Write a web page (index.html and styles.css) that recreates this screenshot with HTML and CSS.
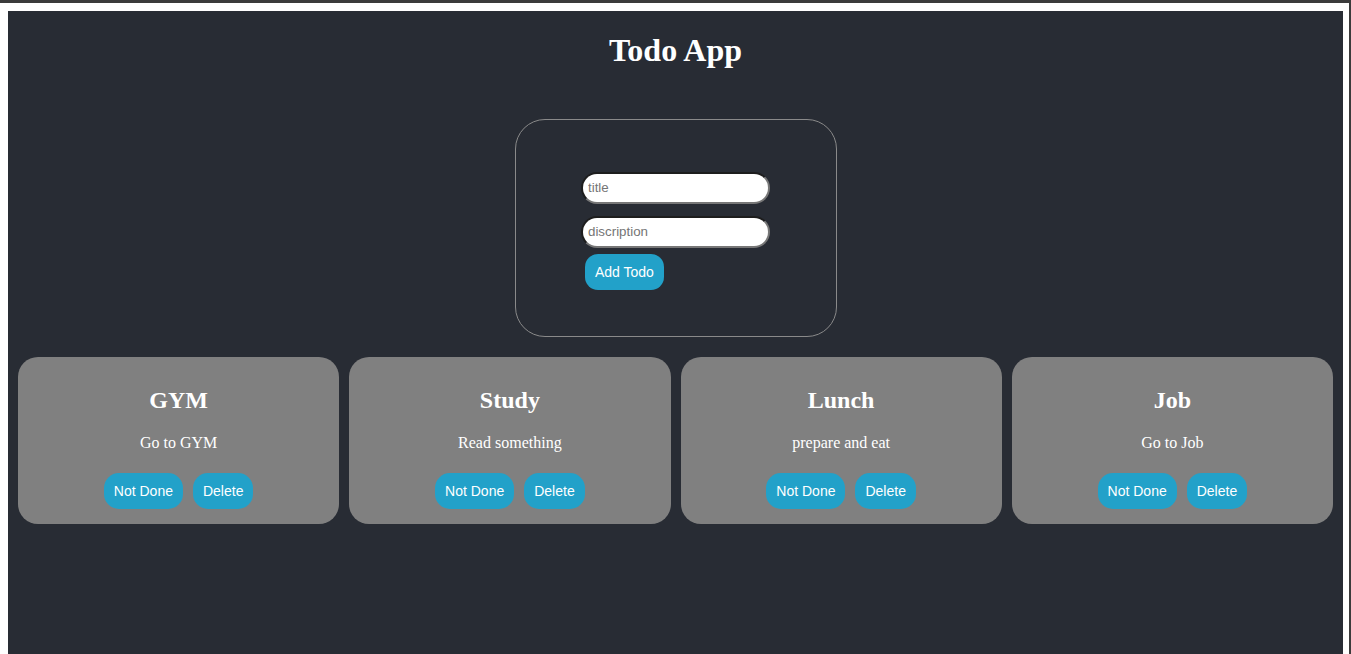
FILE: index.html
```html
<!DOCTYPE html>
<html lang="en">
<head>
<meta charset="utf-8">
<title>Todo App</title>
<link rel="stylesheet" href="styles.css">
</head>
<body>
<div class="app">
  <h1 class="title">Todo App</h1>
  <div class="form-box">
    <div class="form">
      <input class="field" type="text" placeholder="title">
      <input class="field" type="text" placeholder="discription">
      <button class="btn add-btn">Add Todo</button>
    </div>
  </div>
  <div class="cards">
    <div class="card">
      <h2 class="card-title">GYM</h2>
      <p class="card-desc">Go to GYM</p>
      <div class="actions"><button class="btn">Not Done</button><button class="btn">Delete</button></div>
    </div>
    <div class="card">
      <h2 class="card-title">Study</h2>
      <p class="card-desc">Read something</p>
      <div class="actions"><button class="btn">Not Done</button><button class="btn">Delete</button></div>
    </div>
    <div class="card">
      <h2 class="card-title">Lunch</h2>
      <p class="card-desc">prepare and eat</p>
      <div class="actions"><button class="btn">Not Done</button><button class="btn">Delete</button></div>
    </div>
    <div class="card">
      <h2 class="card-title">Job</h2>
      <p class="card-desc">Go to Job</p>
      <div class="actions"><button class="btn">Not Done</button><button class="btn">Delete</button></div>
    </div>
  </div>
</div>
</body>
</html>
```

FILE: styles.css
```css
html {
  border-top: 3px solid #3b3b3b;
  border-right: 2px solid #3b3b3b;
  background: #fff;
}
body {
  margin: 8px 6px 0 8px;
  font-family: "Liberation Serif", "Times New Roman", serif;
}
.app {
  background: #282c34;
  min-height: calc(100vh - 11px);
  padding: 21px 10px 20px;
  box-sizing: border-box;
  color: #fff;
}
.title {
  margin: 0;
  font-size: 32px;
  font-weight: bold;
  text-align: center;
  line-height: 37px;
  color: #fff;
}
.form-box {
  width: 322px;
  margin: 50px auto 0;
  box-sizing: border-box;
  border: 1px solid #8a8a8a;
  border-radius: 30px;
  padding: 52px 0 46px;
  display: flex;
  justify-content: center;
}
.form {
  width: 189px;
  display: flex;
  flex-direction: column;
  align-items: flex-start;
}
.field {
  width: 189px;
  height: 32px;
  box-sizing: border-box;
  border: 2px solid;
  border-color: #1d1d1d #777 #777 #1d1d1d;
  border-radius: 16px;
  padding: 0 5px 1px;
  font-family: "Liberation Sans", Arial, sans-serif;
  font-size: 13.33px;
  background: #fff;
  color: #000;
  margin: 0 0 12px;
}
.field:nth-of-type(2) { margin-bottom: 6px; }
.field::placeholder { color: #757575; }
.btn {
  background: #22a1c9;
  color: #fff;
  border: none;
  border-radius: 15px;
  padding: 0 10px;
  height: 35px;
  font-family: "Liberation Sans", Arial, sans-serif;
  font-size: 14px;
  cursor: pointer;
}
.add-btn {
  height: 36px;
  margin-left: 4px;
  border-radius: 13px;
}
.cards {
  display: grid;
  grid-template-columns: repeat(4, 1fr);
  gap: 10px;
  margin-top: 20px;
}
.card {
  background: #808080;
  border-radius: 20px;
  padding: 10px 10px 15px;
  text-align: center;
  color: #fff;
}
.card-title {
  margin: 19px 0 0;
  font-size: 24px;
  line-height: 28px;
  font-weight: bold;
}
.card-desc {
  margin: 20px 0 0;
  font-size: 16px;
  line-height: 18px;
}
.actions {
  margin-top: 21px;
  display: flex;
  justify-content: center;
  gap: 10px;
}
.actions .btn {
  height: 36px;
}
```
